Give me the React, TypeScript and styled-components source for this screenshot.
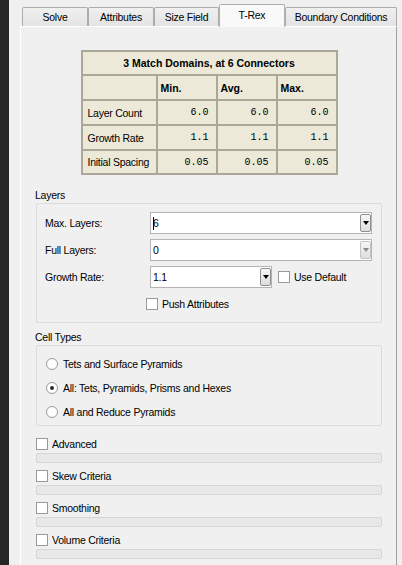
import React from "react"
import styled, { createGlobalStyle, css } from "styled-components"

const GlobalStyle = createGlobalStyle`
  html, body {
    margin: 0;
    padding: 0;
    background: #f0f0f0;
  }
  body {
    font-family: "Liberation Sans", Arial, sans-serif;
    font-size: 10.5px;
    letter-spacing: -0.25px;
    color: #000;
  }
  * {
    box-sizing: border-box;
  }
`

const Window = styled.div`
  display: flex;
  height: 565px;
  overflow: hidden;
`

const SideStrip = styled.div`
  width: 9px;
  flex: none;
  background: #252628;
`

const Main = styled.div`
  flex: 1;
  display: flex;
  flex-direction: column;
  padding: 4px 5px 0 11px;
`

const TabBar = styled.div`
  display: flex;
  align-items: flex-end;
  height: 23px;
  padding-left: 2px;
  margin-bottom: -1px;
  position: relative;
  z-index: 1;
`

const Tab = styled.div<{ $width: number; $active?: boolean }>`
  width: ${(p) => p.$width}px;
  height: 19px;
  margin-bottom: 1px;
  display: flex;
  align-items: center;
  justify-content: center;
  border: 1px solid #acacac;
  border-bottom: none;
  border-radius: 2px 2px 0 0;
  background: linear-gradient(#f0f0f0, #e3e3e3);
  white-space: nowrap;

  ${(p) =>
    p.$active &&
    css`
      height: 23px;
      margin-bottom: 0;
      padding-bottom: 3px;
      background: #f9f9f9;
      border-color: #b0b0b0;
    `}
`

const Pane = styled.div`
  flex: 1;
  display: flex;
  flex-direction: column;
  border-top: 1px solid #ffffff;
  border-left: 1px solid #ffffff;
  border-right: 1px solid #a0a0a0;
  padding: 0 14px 0 15px;
`

const StatsGrid = styled.div`
  align-self: center;
  margin-top: 23px;
  display: grid;
  grid-template-columns: 73px 58px 58px 58px;
  grid-template-rows: 22px 23px 23px 23px 22px;
  gap: 2px;
  padding: 2px;
  background: #aca899;
`

const StatCell = styled.div<{ $title?: boolean; $head?: boolean; $num?: boolean }>`
  background: #ece9d8;
  display: flex;
  align-items: center;
  padding: 0 5px;
  white-space: nowrap;

  ${(p) =>
    p.$title &&
    css`
      grid-column: 1 / 5;
      justify-content: center;
      font-weight: bold;
      letter-spacing: 0;
    `}
  ${(p) =>
    p.$head &&
    css`
      font-weight: bold;
      letter-spacing: 0;
      padding-left: 3px;
    `}
  ${(p) =>
    p.$num &&
    css`
      justify-content: flex-end;
      padding-right: 7px;
      font-family: "Liberation Mono", "Courier New", monospace;
      font-size: 10px;
      letter-spacing: 0;
    `}
`

const SectionTitle = styled.div<{ $gap: number }>`
  margin-top: ${(p) => p.$gap}px;
  margin-left: -1px;
  line-height: 13px;
  height: 13px;
`

const GroupBox = styled.div`
  margin-top: 1px;
  border: 1px solid #dcdcdc;
  border-radius: 2px;
`

const LayersGrid = styled.div`
  display: grid;
  grid-template-columns: 105px 1fr;
  row-gap: 5px;
  align-items: center;
  padding: 8px 9px 11px 8px;
`

const FieldLabel = styled.div`
  line-height: 13px;
`

const FieldLine = styled.div`
  display: flex;
  align-items: center;
`

const Combo = styled.div<{ $width?: number }>`
  height: 22px;
  width: ${(p) => (p.$width ? `${p.$width}px` : "100%")};
  display: flex;
  align-items: center;
  padding-left: 2px;
  border: 1px solid #b4b4b4;
  background: #ffffff;
`

const ComboValue = styled.span`
  display: flex;
  align-items: center;
`

const Caret = styled.span`
  width: 1px;
  height: 13px;
  background: #000;
  margin-right: -1px;
`

const DropButton = styled.div<{ $disabled?: boolean }>`
  margin-left: auto;
  width: 11px;
  height: 18px;
  display: flex;
  align-items: center;
  justify-content: center;
  border: 1px solid ${(p) => (p.$disabled ? "#c4c4c4" : "#8f8f8f")};
  border-radius: 2px;
  background: linear-gradient(#f6f6f6, #dedede);

  &::after {
    content: "";
    width: 0;
    height: 0;
    border-left: 3px solid transparent;
    border-right: 3px solid transparent;
    border-top: 4px solid ${(p) => (p.$disabled ? "#8a8a8a" : "#000")};
  }
`

const CheckRow = styled.label<{ $offset?: number }>`
  display: flex;
  align-items: center;
  gap: 4px;
  height: 14px;
  margin-left: ${(p) => p.$offset ?? 0}px;
  white-space: nowrap;
`

const CheckBox = styled.span`
  width: 12px;
  height: 12px;
  flex: none;
  border: 1px solid #9a9a9a;
  background: #ffffff;
`

const PushRow = styled.div`
  grid-column: 2;
  margin-top: 4px;
`

const RadioList = styled.div`
  display: flex;
  flex-direction: column;
  padding: 6px 9px 1px;
`

const RadioRow = styled.div`
  height: 24px;
  display: flex;
  align-items: center;
  gap: 5px;
`

const Radio = styled.span<{ $checked?: boolean }>`
  width: 12px;
  height: 12px;
  flex: none;
  border-radius: 50%;
  border: 1px solid #9a9a9a;
  background: #ffffff;
  display: flex;
  align-items: center;
  justify-content: center;

  &::after {
    content: "";
    width: 4px;
    height: 4px;
    border-radius: 50%;
    background: ${(p) => (p.$checked ? "#2b2b2b" : "transparent")};
  }
`

const Options = styled.div`
  display: flex;
  flex-direction: column;
  margin-top: 11px;
`

const OptionBlock = styled.div`
  display: flex;
  flex-direction: column;
  gap: 2px;
  margin-bottom: 6px;
`

const CollapsedBar = styled.div`
  height: 10px;
  border: 1px solid #d6d6d6;
  border-radius: 2px;
  background: #e8e8e8;
`

const tabs = [
  { name: "Solve", width: 66 },
  { name: "Attributes", width: 66 },
  { name: "Size Field", width: 65 },
  { name: "T-Rex", width: 66, active: true },
  { name: "Boundary Conditions", width: 112 },
]

const stats = [
  { label: "Layer Count", value: "6.0" },
  { label: "Growth Rate", value: "1.1" },
  { label: "Initial Spacing", value: "0.05" },
]

const cellTypes = [
  { label: "Tets and Surface Pyramids" },
  { label: "All: Tets, Pyramids, Prisms and Hexes", checked: true },
  { label: "All and Reduce Pyramids" },
]

const options = ["Advanced", "Skew Criteria", "Smoothing", "Volume Criteria"]

export default function App() {
  return (
    <>
      <GlobalStyle />
      <Window>
        <SideStrip />
        <Main>
          <TabBar>
            {tabs.map((t) => (
              <Tab key={t.name} $width={t.width} $active={t.active}>
                {t.name}
              </Tab>
            ))}
          </TabBar>

          <Pane>
            <StatsGrid>
              <StatCell $title>3 Match Domains, at 6 Connectors</StatCell>
              <StatCell />
              <StatCell $head>Min.</StatCell>
              <StatCell $head>Avg.</StatCell>
              <StatCell $head>Max.</StatCell>
              {stats.map((s) => (
                <React.Fragment key={s.label}>
                  <StatCell>{s.label}</StatCell>
                  <StatCell $num>{s.value}</StatCell>
                  <StatCell $num>{s.value}</StatCell>
                  <StatCell $num>{s.value}</StatCell>
                </React.Fragment>
              ))}
            </StatsGrid>

            <SectionTitle $gap={14}>Layers</SectionTitle>
            <GroupBox>
              <LayersGrid>
                <FieldLabel>Max. Layers:</FieldLabel>
                <Combo>
                  <ComboValue>
                    <Caret />6
                  </ComboValue>
                  <DropButton />
                </Combo>

                <FieldLabel>Full Layers:</FieldLabel>
                <Combo>
                  <ComboValue>0</ComboValue>
                  <DropButton $disabled />
                </Combo>

                <FieldLabel>Growth Rate:</FieldLabel>
                <FieldLine>
                  <Combo $width={122}>
                    <ComboValue>1.1</ComboValue>
                    <DropButton />
                  </Combo>
                  <CheckRow $offset={6}>
                    <CheckBox />
                    Use Default
                  </CheckRow>
                </FieldLine>

                <PushRow>
                  <CheckRow $offset={-4}>
                    <CheckBox />
                    Push Attributes
                  </CheckRow>
                </PushRow>
              </LayersGrid>
            </GroupBox>

            <SectionTitle $gap={8}>Cell Types</SectionTitle>
            <GroupBox>
              <RadioList>
                {cellTypes.map((c) => (
                  <RadioRow key={c.label}>
                    <Radio $checked={c.checked} />
                    {c.label}
                  </RadioRow>
                ))}
              </RadioList>
            </GroupBox>

            <Options>
              {options.map((o) => (
                <OptionBlock key={o}>
                  <CheckRow>
                    <CheckBox />
                    {o}
                  </CheckRow>
                  <CollapsedBar />
                </OptionBlock>
              ))}
            </Options>
          </Pane>
        </Main>
      </Window>
    </>
  )
}
